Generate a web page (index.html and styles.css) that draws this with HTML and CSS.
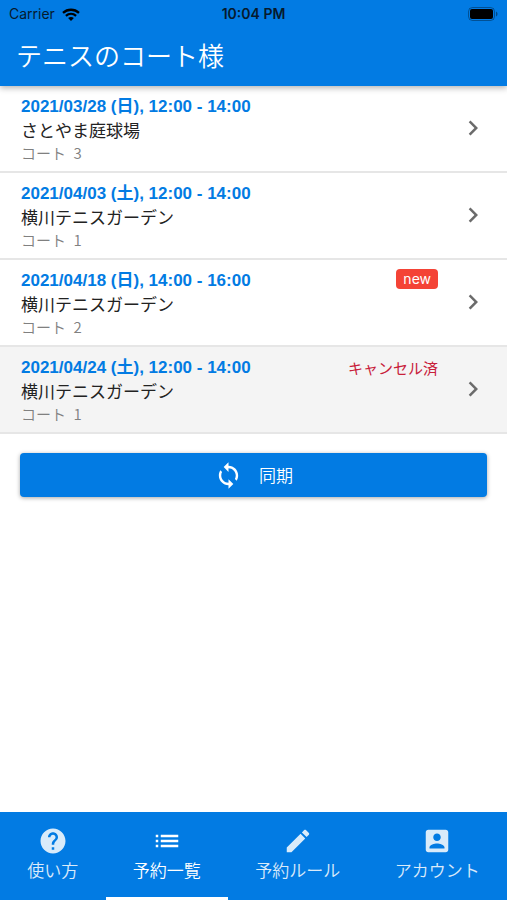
FILE: index.html
```html
<!DOCTYPE html>
<html lang="ja">
<head>
<meta charset="utf-8">
<meta name="viewport" content="width=device-width, initial-scale=1">
<title>予約一覧</title>
<link rel="stylesheet" href="styles.css">
</head>
<body>
<header class="app-bar">
  <div class="status">
    <span class="carrier">Carrier
      <svg class="wifi" viewBox="0 0 18 13" aria-hidden="true"><path d="M1 4.8C5.6.7 12.4.7 17 4.8M3.9 7.8c3-2.6 7.2-2.6 10.2 0" fill="none" stroke="currentColor" stroke-width="2.3"/><path d="M6.1 10.1c1.7-1.4 4.1-1.4 5.8 0L9 13z" fill="currentColor"/></svg>
    </span>
    <time class="clock">10:04 PM</time>
    <svg class="battery" viewBox="0 0 30 14" aria-hidden="true"><rect x=".5" y=".5" width="26" height="13" rx="4" fill="none" stroke="#000" stroke-opacity=".35"/><rect x="2" y="2" width="23" height="10" rx="2" fill="#000"/><path d="M28 4.500c2 .8 2 4.200 0 5z" fill="#000" fill-opacity=".4"/></svg>
  </div>
  <h1 class="title">テニスのコート様</h1>
</header>
<main class="content">
  <ul class="list">
    <li><a class="row" href="#r1">
      <span class="info"><span class="date">2021/03/28 (日), 12:00 - 14:00</span><span class="place">さとやま庭球場</span><span class="court">コート&ensp;3</span></span>
      <svg class="chevron" viewBox="0 0 24 24" aria-hidden="true"><path d="M10 6 8.590 7.410 13.170 12l-4.580 4.590L10 18l6-6z"/></svg>
    </a></li>
    <li><a class="row" href="#r2">
      <span class="info"><span class="date">2021/04/03 (土), 12:00 - 14:00</span><span class="place">横川テニスガーデン</span><span class="court">コート&ensp;1</span></span>
      <svg class="chevron" viewBox="0 0 24 24" aria-hidden="true"><path d="M10 6 8.590 7.410 13.170 12l-4.580 4.590L10 18l6-6z"/></svg>
    </a></li>
    <li><a class="row" href="#r3">
      <span class="info"><span class="date">2021/04/18 (日), 14:00 - 16:00</span><span class="place">横川テニスガーデン</span><span class="court">コート&ensp;2</span></span>
      <span class="badge">new</span>
      <svg class="chevron" viewBox="0 0 24 24" aria-hidden="true"><path d="M10 6 8.590 7.410 13.170 12l-4.580 4.590L10 18l6-6z"/></svg>
    </a></li>
    <li><a class="row cancelled" href="#r4">
      <span class="info"><span class="date">2021/04/24 (土), 12:00 - 14:00</span><span class="place">横川テニスガーデン</span><span class="court">コート&ensp;1</span></span>
      <span class="cancel-note">キャンセル済</span>
      <svg class="chevron" viewBox="0 0 24 24" aria-hidden="true"><path d="M10 6 8.590 7.410 13.170 12l-4.580 4.590L10 18l6-6z"/></svg>
    </a></li>
  </ul>
  <button class="sync" type="button">
    <svg class="sync-icon" viewBox="0 0 24 24" aria-hidden="true"><path d="M12 4V1L8 5l4 4V6c3.310 0 6 2.690 6 6 0 1.010-.25 1.970-.7 2.800l1.460 1.460C19.540 15.030 20 13.570 20 12c0-4.420-3.580-8-8-8zm0 14c-3.310 0-6-2.690-6-6 0-1.010.25-1.970.7-2.800L5.240 7.740C4.460 8.970 4 10.430 4 12c0 4.420 3.580 8 8 8v3l4-4-4-4z"/></svg>
    <span>同期</span>
  </button>
</main>
<nav class="tabs">
  <a class="tab" href="#help"><svg viewBox="0 0 24 24" aria-hidden="true"><path d="M12 2C6.480 2 2 6.480 2 12s4.480 10 10 10 10-4.480 10-10S17.520 2 12 2zm1 17h-2v-2h2zm2.070-7.750-.9.920C13.450 12.900 13 13.500 13 15h-2v-.5c0-1.100.45-2.100 1.170-2.830l1.240-1.260c.37-.36.59-.86.59-1.410 0-1.100-.9-2-2-2s-2 .9-2 2H8c0-2.210 1.790-4 4-4s4 1.790 4 4c0 .88-.36 1.680-.93 2.250z"/></svg><span>使い方</span></a>
  <a class="tab active" href="#list" aria-current="page"><svg viewBox="0 0 24 24" aria-hidden="true"><path d="M3 13h2v-2H3zm0 4h2v-2H3zm0-8h2V7H3zm4 4h14v-2H7zm0 4h14v-2H7zM7 7v2h14V7z"/></svg><span>予約一覧</span></a>
  <a class="tab" href="#rules"><svg viewBox="0 0 24 24" aria-hidden="true"><path d="M3 17.250V21h3.750L17.810 9.940l-3.750-3.750zM20.710 7.040c.39-.39.39-1.020 0-1.410l-2.340-2.340c-.39-.39-1.020-.39-1.410 0l-1.830 1.830 3.750 3.750z"/></svg><span>予約ルール</span></a>
  <a class="tab" href="#account"><svg viewBox="0 0 24 24" aria-hidden="true"><path d="M3 5v14c0 1.100.89 2 2 2h14c1.100 0 2-.9 2-2V5c0-1.100-.9-2-2-2H5c-1.110 0-2 .9-2 2zm12 4c0 1.660-1.340 3-3 3s-3-1.340-3-3 1.340-3 3-3 3 1.340 3 3zm-9 8c0-2 4-3.100 6-3.100s6 1.100 6 3.100v1H6z"/></svg><span>アカウント</span></a>
</nav>
</body>
</html>
```

FILE: styles.css
```css
* { box-sizing: border-box; }

body {
  margin: 0;
  min-height: 100vh;
  display: flex;
  flex-direction: column;
  background: #fff;
  color: #222;
  font-family: "Liberation Sans", "Noto Sans CJK JP", sans-serif;
}

a { color: inherit; text-decoration: none; }
svg { fill: currentColor; flex: none; }

.app-bar {
  position: relative;
  background: #027be3;
  box-shadow: 0 2px 6px rgba(0, 0, 0, .3);
}

.status {
  display: grid;
  grid-template-columns: 1fr auto 1fr;
  align-items: center;
  height: 28px;
  padding: 0 9px;
  color: #061a2e;
  font: 14px/28px Inter, sans-serif;
}
.carrier { display: flex; align-items: center; gap: 7px; }
.wifi { width: 18px; height: 13px; color: #000; }
.clock { font-weight: 600; }
.battery { width: 30px; height: 14px; justify-self: end; }

.title {
  margin: 0;
  padding: 0 16px;
  height: 58px;
  color: #fff;
  font: 350 26px/54px "Noto Sans CJK JP", sans-serif;
}

.content { flex: 1; }
.list { margin: 0; padding: 0; list-style: none; }

.row {
  display: flex;
  align-items: flex-start;
  padding: 9px 19px 9px 21px;
  border-bottom: 2px solid #e6e6e6;
}
.cancelled { background: #f4f4f4; }
.info { flex: 1; display: flex; flex-direction: column; }
.date { color: #027be3; font-size: 17px; font-weight: 700; line-height: 24px; }
.place { font-size: 17px; line-height: 25px; }
.court { color: #808080; font-size: 15px; font-weight: 350; line-height: 18px; font-family: "Noto Sans CJK JP", sans-serif; }
.chevron { align-self: center; width: 30px; height: 30px; margin: -2px 0 0 20px; color: #6b6b6b; }

.badge {
  padding: 0 7px;
  border-radius: 4px;
  background: #f44336;
  color: #fff;
  font: 14px/20px Inter, sans-serif;
}
.cancel-note { color: #c8203a; font-size: 15px; line-height: 26px; }

.sync {
  display: flex;
  align-items: center;
  justify-content: center;
  gap: 16px;
  width: calc(100% - 40px);
  height: 44px;
  margin: 19px 20px;
  padding: 0;
  border: 0;
  border-radius: 4px;
  background: #027be3;
  box-shadow: 0 1px 4px rgba(0, 0, 0, .35);
  color: #fff;
  font: 350 17px/24px "Noto Sans CJK JP", sans-serif;
}
.sync-icon { width: 29px; height: 29px; }

.tabs { display: flex; height: 88px; background: #027be3; color: #fff; }
.tab {
  flex: 1 1 auto;
  display: flex;
  flex-direction: column;
  align-items: center;
  padding-top: 14px;
  border-bottom: 3px solid transparent;
  font: 350 17px/28px "Noto Sans CJK JP", sans-serif;
}
.tab svg { width: 30px; height: 30px; }
.tab svg, .tab span { opacity: .85; }
.tab.active { border-bottom-color: #fff; }
.tab.active svg, .tab.active span { opacity: 1; }
```
